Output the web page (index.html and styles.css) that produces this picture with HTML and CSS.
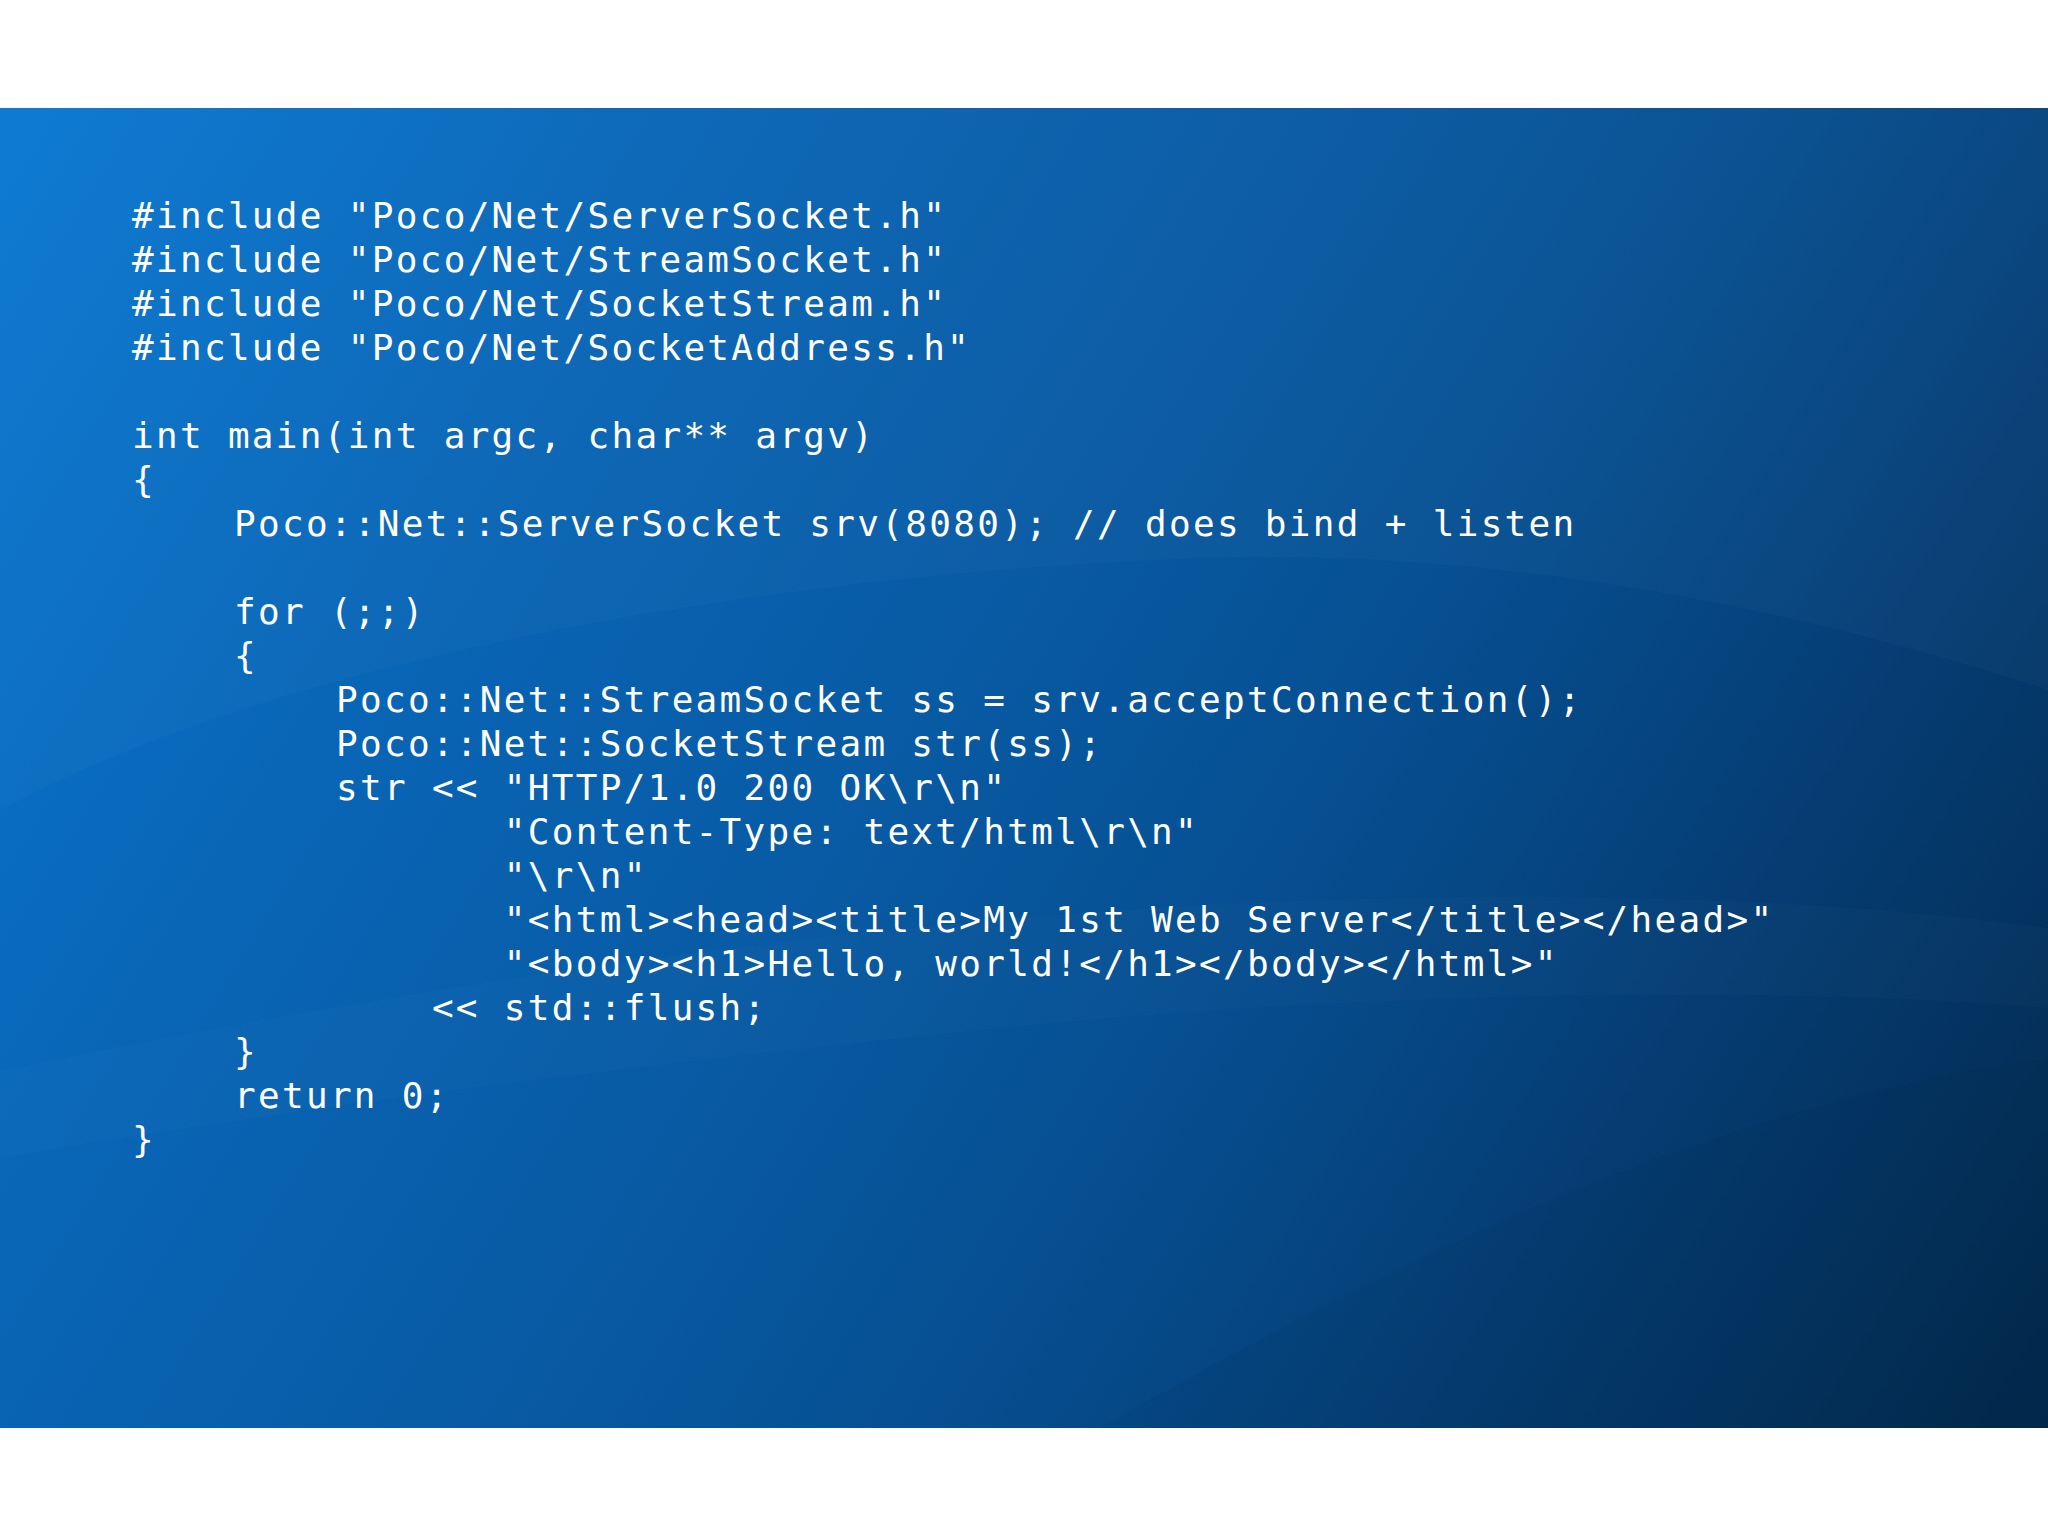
FILE: index.html
```html
<!DOCTYPE html>
<html lang="en">
<head>
<meta charset="utf-8">
<title>Poco Web Server</title>
<link rel="stylesheet" href="styles.css">
</head>
<body>
<div class="slide">
  <svg class="bg" viewBox="0 0 2048 1320" preserveAspectRatio="none" aria-hidden="true">
    <path class="glow" d="M0,0 L2048,0 L2048,582 C1800,500 1500,440 1200,450 C800,465 300,540 0,702 Z"/>
    <path class="glow2" d="M0,963 C400,880 900,800 1400,790 C1700,785 1900,800 2048,820 L2048,900 C1800,880 1400,880 1000,920 C600,960 300,1000 0,1050 Z"/>
    <path class="shade" d="M1100,1320 C1400,1150 1700,1000 2048,950 L2048,1320 Z"/>
  </svg>
  <div class="code">
    <div class="line">#include "Poco/Net/ServerSocket.h"</div>
    <div class="line">#include "Poco/Net/StreamSocket.h"</div>
    <div class="line">#include "Poco/Net/SocketStream.h"</div>
    <div class="line">#include "Poco/Net/SocketAddress.h"</div>
    <div class="line"> </div>
    <div class="line">int main(int argc, char** argv)</div>
    <div class="line">{</div>
    <div class="line l1">Poco::Net::ServerSocket srv(8080); // does bind + listen</div>
    <div class="line"> </div>
    <div class="line l1">for (;;)</div>
    <div class="line l1">{</div>
    <div class="line l2">Poco::Net::StreamSocket ss = srv.acceptConnection();</div>
    <div class="line l2">Poco::Net::SocketStream str(ss);</div>
    <div class="line l2">str &lt;&lt; "HTTP/1.0 200 OK\r\n"</div>
    <div class="line l2">       "Content-Type: text/html\r\n"</div>
    <div class="line l2">       "\r\n"</div>
    <div class="line l2">       "&lt;html&gt;&lt;head&gt;&lt;title&gt;My 1st Web Server&lt;/title&gt;&lt;/head&gt;"</div>
    <div class="line l2">       "&lt;body&gt;&lt;h1&gt;Hello, world!&lt;/h1&gt;&lt;/body&gt;&lt;/html&gt;"</div>
    <div class="line l2">    &lt;&lt; std::flush;</div>
    <div class="line l1">}</div>
    <div class="line l1">return 0;</div>
    <div class="line">}</div>
  </div>
</div>
</body>
</html>
```

FILE: styles.css
```css
html, body {
  margin: 0;
  padding: 0;
  background: #ffffff;
}

.slide {
  position: relative;
  margin-top: 108px;
  height: 1320px;
  overflow: hidden;
  background: linear-gradient(122deg, #0978d2 0%, #0966b7 24%, #085aa3 46%, #064e90 62%, #053b70 80%, #03284b 100%);
}

.bg {
  position: absolute;
  left: 0;
  top: 0;
  width: 100%;
  height: 100%;
}

.glow {
  fill: #ffffff;
  fill-opacity: 0.025;
}

.glow2 {
  fill: #ffffff;
  fill-opacity: 0.015;
}

.shade {
  fill: #001a33;
  fill-opacity: 0.06;
}

.code {
  position: relative;
  padding: 86px 0 0 132px;
  font-family: "DejaVu Sans Mono", monospace;
  font-size: 36px;
  line-height: 44px;
  letter-spacing: 2.3px;
  color: #ffffff;
}

.line {
  min-height: 44px;
  white-space: pre;
}

.l1 {
  padding-left: 102px;
}

.l2 {
  padding-left: 204px;
}
```
